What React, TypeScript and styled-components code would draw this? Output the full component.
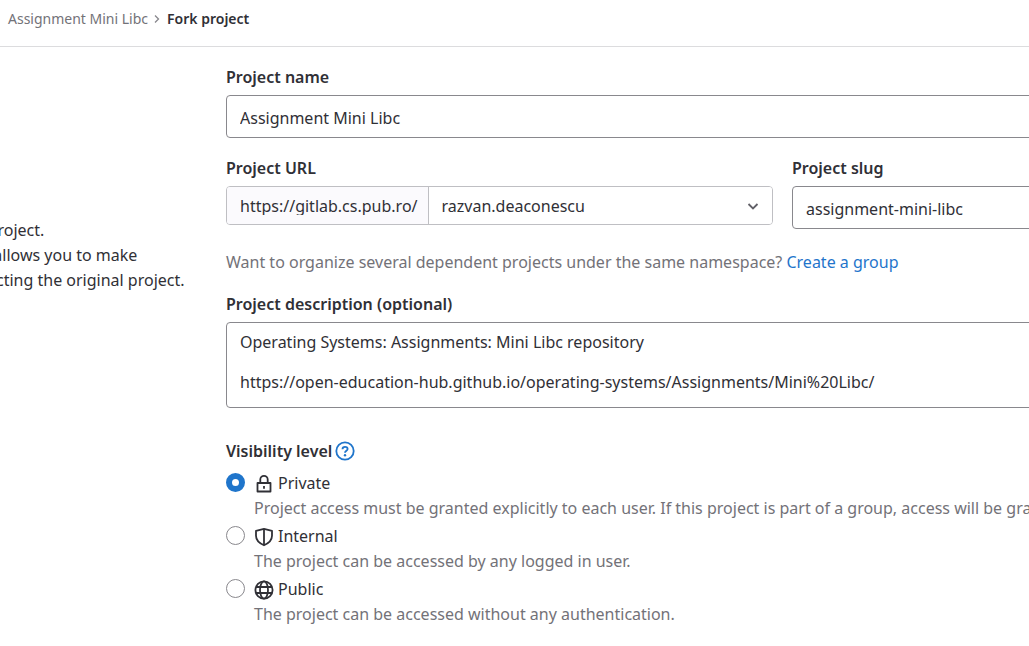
import React, { useState } from "react";
import styled, { createGlobalStyle, css } from "styled-components";

const ink = "#303036";
const muted = "#737278";
const blue = "#1f75cb";
const line = "#89888d";
const softLine = "#bfbfc3";

const GlobalStyle = createGlobalStyle`
  *, *::before, *::after { box-sizing: border-box; }
  body {
    margin: 0;
    overflow-x: hidden;
    background: #fff;
    color: ${ink};
    font-family: "Noto Sans", "Open Sans", sans-serif;
    font-size: 16px;
    line-height: 24px;
  }
  a { color: ${blue}; text-decoration: none; }
  a:hover { text-decoration: underline; }
`;

const Page = styled.div`
  overflow: hidden;
`;

const TopBar = styled.nav`
  display: flex;
  align-items: center;
  height: 47px;
  padding: 0 8px 8px;
  border-bottom: 1px solid #dcdcde;
  font-size: 14px;
  line-height: 20px;
`;

const Crumb = styled.a<{ $current?: boolean }>`
  && {
    color: ${(p) => (p.$current ? ink : muted)};
    font-weight: ${(p) => (p.$current ? 600 : 400)};
  }
`;

const CrumbArrow = styled.svg`
  width: 12px;
  height: 12px;
  margin: 0 4px 0 3px;
`;

const Columns = styled.main`
  display: flex;
  padding-top: 18px;
`;

const Intro = styled.aside`
  flex: 0 0 388px;
  margin-left: -162px;
  padding-top: 153px;
  white-space: nowrap;
`;

const IntroText = styled.p`
  margin: 0;
  line-height: 25px;
`;

const Form = styled.form`
  flex: 1;
  min-width: 0;
  margin-right: -310px;
`;

const Field = styled.div`
  display: flex;
  flex-direction: column;
  gap: 6px;
  margin-bottom: 18px;
`;

const FieldRow = styled.div`
  display: grid;
  grid-template-columns: 1fr 1fr;
  column-gap: 19px;
`;

const labelText = css`
  font-weight: 600;
  line-height: 24px;
`;

const Label = styled.label`
  ${labelText}
`;

const controlBox = css`
  width: 100%;
  border: 1px solid ${line};
  border-radius: 4px;
  background: #fff;
  color: ${ink};
  font: inherit;
`;

const TextInput = styled.input`
  ${controlBox}
  height: 43px;
  padding: 2px 13px 0;
`;

const TextArea = styled.textarea`
  ${controlBox}
  display: block;
  height: 86px;
  padding: 9px 13px;
  line-height: 20px;
  resize: none;
`;

const InputGroup = styled.div`
  display: flex;
  height: 39px;
  border: 1px solid ${softLine};
  border-radius: 4px;
  overflow: hidden;
`;

const Prefix = styled.div`
  display: flex;
  align-items: center;
  padding: 0 10px 0 13px;
  border-right: 1px solid ${softLine};
  background: #fbfafd;
`;

const PrefixText = styled.span`
  overflow: hidden;
  line-height: 18px;
  white-space: nowrap;
`;

const SelectWrap = styled.div`
  position: relative;
  flex: 1;
`;

const Select = styled.select`
  width: 100%;
  height: 100%;
  padding: 0 40px 0 13px;
  border: 0;
  appearance: none;
  background: #fff;
  color: ${ink};
  font: inherit;
`;

const SelectArrow = styled.svg`
  position: absolute;
  top: 11px;
  right: 11px;
  width: 16px;
  height: 16px;
  pointer-events: none;
`;

const Hint = styled.p`
  margin: 0;
  padding: 3px 0 18px;
  color: ${muted};
`;

const Fieldset = styled.fieldset`
  margin: 31px 0 0;
  padding: 0;
  border: 0;
`;

const Legend = styled.legend`
  ${labelText}
  display: flex;
  align-items: center;
  gap: 3px;
  padding: 0;
  margin-bottom: 8px;
`;

const HelpLink = styled.a`
  display: flex;
`;

const Option = styled.div`
  display: grid;
  grid-template-columns: 19px 1fr;
  column-gap: 9px;
  margin-bottom: 3px;
  line-height: 25px;
`;

const Radio = styled.input`
  appearance: none;
  width: 19px;
  height: 19px;
  margin: 2px 0 0;
  border: 1px solid ${line};
  border-radius: 50%;
  background: #fff;

  &:checked {
    border: 6px solid ${blue};
  }
`;

const OptionLabel = styled.label`
  display: flex;
  align-items: center;
  gap: 4px;
`;

const OptionText = styled.p`
  grid-column: 2;
  margin: 0;
  color: ${muted};
  white-space: nowrap;
`;

const Icon = styled.svg`
  display: block;
  width: 20px;
  height: 20px;
  fill: none;
  stroke: currentColor;
  stroke-width: 1.8;
`;

const LockIcon = () => (
  <Icon viewBox="0 0 20 20" aria-hidden="true">
    <path d="M3.500 9h13v8.500h-13zM6.300 9V5.500a3.700 3.700 0 0 1 7.400 0V9" strokeLinejoin="round" />
    <path d="M10 12v2.800" />
  </Icon>
);

const ShieldIcon = () => (
  <Icon viewBox="0 0 20 20" aria-hidden="true">
    <path d="M10 1.900 2 3.800v5c0 4.500 3.500 7.500 8 9.500 4.500-2 8-5 8-9.500v-5z" strokeLinejoin="round" />
    <path d="M10 2v16" />
  </Icon>
);

const GlobeIcon = () => (
  <Icon viewBox="0 0 20 20" aria-hidden="true">
    <circle cx="10" cy="10" r="8.600" />
    <ellipse cx="10" cy="10" rx="4" ry="8.600" />
    <path d="M2 7h16M2 13h16" />
  </Icon>
);

const QuestionIcon = () => (
  <Icon viewBox="0 0 20 20" aria-hidden="true">
    <circle cx="10" cy="10" r="8.700" />
    <path d="M7.500 8.200C7.500 6.700 8.600 5.800 10 5.800s2.600.9 2.600 2.200c0 1.700-2.600 1.700-2.600 3.800" />
    <circle cx="10" cy="14.200" r="1.200" fill="currentColor" stroke="none" />
  </Icon>
);

const levels = [
  {
    id: "private",
    name: "Private",
    icon: <LockIcon />,
    text: "Project access must be granted explicitly to each user. If this project is part of a group, access will be granted to members of the group.",
  },
  {
    id: "internal",
    name: "Internal",
    icon: <ShieldIcon />,
    text: "The project can be accessed by any logged in user.",
  },
  {
    id: "public",
    name: "Public",
    icon: <GlobeIcon />,
    text: "The project can be accessed without any authentication.",
  },
];

export default function App() {
  const [level, setLevel] = useState("private");

  return (
    <Page>
      <GlobalStyle />
      <TopBar aria-label="Breadcrumb">
        <Crumb href="#project">Assignment Mini Libc</Crumb>
        <CrumbArrow viewBox="0 0 12 12" aria-hidden="true">
          <path d="m4 2.500 3.500 3.500L4 9.500" fill="none" stroke={line} strokeWidth="1.300" />
        </CrumbArrow>
        <Crumb href="#fork" $current>
          Fork project
        </Crumb>
      </TopBar>

      <Columns>
        <Intro>
          <IntroText>A fork is a copy of a project.</IntroText>
          <IntroText>
            Forking a repository allows you to make
            <br />
            changes without affecting the original project.
          </IntroText>
        </Intro>

        <Form>
          <Field>
            <Label htmlFor="name">Project name</Label>
            <TextInput id="name" defaultValue="Assignment Mini Libc" />
          </Field>

          <FieldRow>
            <Field>
              <Label htmlFor="namespace">Project URL</Label>
              <InputGroup>
                <Prefix>
                  <PrefixText>https://gitlab.cs.pub.ro/</PrefixText>
                </Prefix>
                <SelectWrap>
                  <Select id="namespace">
                    <option>razvan.deaconescu</option>
                  </Select>
                  <SelectArrow viewBox="0 0 16 16" aria-hidden="true">
                    <path d="m3.500 6 4.500 4.500L12.500 6" fill="none" stroke="#626168" strokeWidth="1.800" />
                  </SelectArrow>
                </SelectWrap>
              </InputGroup>
            </Field>
            <Field>
              <Label htmlFor="slug">Project slug</Label>
              <TextInput id="slug" defaultValue="assignment-mini-libc" />
            </Field>
          </FieldRow>

          <Hint>
            Want to organize several dependent projects under the same namespace?{" "}
            <a href="#new-group">Create a group</a>
          </Hint>

          <Field>
            <Label htmlFor="description">Project description (optional)</Label>
            <TextArea
              id="description"
              defaultValue={
                "Operating Systems: Assignments: Mini Libc repository\n\nhttps://open-education-hub.github.io/operating-systems/Assignments/Mini%20Libc/"
              }
            />
          </Field>

          <Fieldset>
            <Legend>
              Visibility level
              <HelpLink href="#visibility-help" aria-label="About visibility levels">
                <QuestionIcon />
              </HelpLink>
            </Legend>
            {levels.map((item) => (
              <Option key={item.id}>
                <Radio
                  type="radio"
                  name="visibility"
                  id={item.id}
                  checked={level === item.id}
                  onChange={() => setLevel(item.id)}
                />
                <OptionLabel htmlFor={item.id}>
                  {item.icon}
                  {item.name}
                </OptionLabel>
                <OptionText>{item.text}</OptionText>
              </Option>
            ))}
          </Fieldset>
        </Form>
      </Columns>
    </Page>
  );
}
